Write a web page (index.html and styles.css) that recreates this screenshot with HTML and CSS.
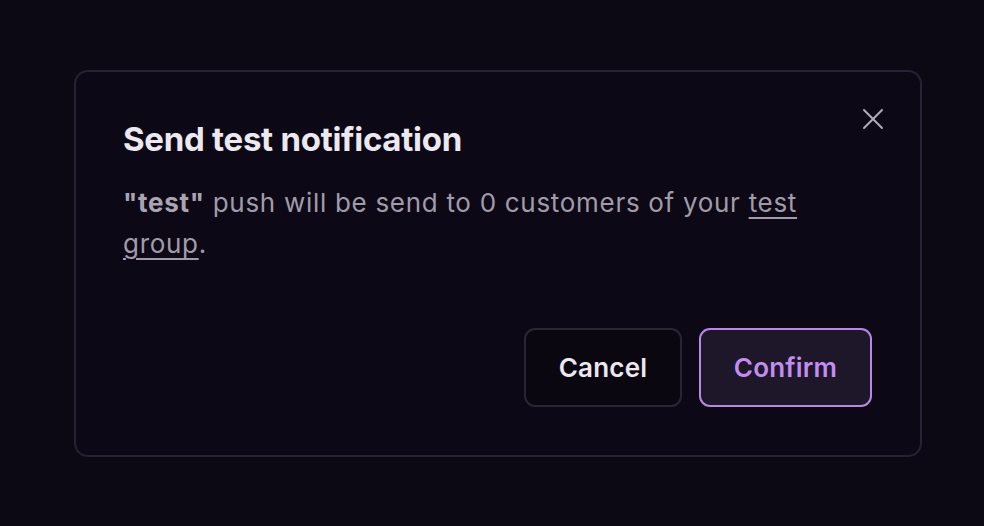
FILE: index.html
```html
<!DOCTYPE html>
<html lang="en">
<head>
  <meta charset="UTF-8" />
  <title>Send test notification</title>
  <link rel="stylesheet" href="styles.css">
</head>
<body>
  <div class="dialog">
    <button class="close" aria-label="Close">
      <svg width="22" height="22" viewBox="0 0 22 22" fill="none" stroke="currentColor" stroke-width="2" stroke-linecap="round">
        <path d="M2 2 L20 20 M20 2 L2 20" />
      </svg>
    </button>

    <h1>Send test notification</h1>
    <p>
      <strong>"test"</strong> push will be send to 0 customers of your <a href="#">test group</a>.
    </p>

    <div class="actions">
      <button class="btn cancel">Cancel</button>
      <button class="btn confirm">Confirm</button>
    </div>
  </div>
</body>
</html>
```

FILE: styles.css
```css
html, body {
  margin: 0;
  padding: 0;
  height: 100%;
  width: 100%;
  font-family: Inter, 'Noto Sans', sans-serif;
}
body {
  background: #0c0814;
  padding: 70px 62px 0 74px;
  box-sizing: border-box;
}
.dialog {
  position: relative;
  background: #0d0816;
  border: 2px solid #272233;
  border-radius: 14px;
  padding: 45px 48px 48px 47px;
  box-sizing: border-box;
  height: 387px;
  display: flex;
  flex-direction: column;
}
h1 {
  margin: 0;
  color: #ebe8ef;
  font-size: 33px;
  font-weight: 700;
  letter-spacing: -0.28px;
  line-height: 44px;
}
p {
  margin: 21px 0 0 0;
  color: #a19ba9;
  font-size: 26px;
  letter-spacing: 0.7px;
  line-height: 41px;
  max-width: 700px;
}
p strong {
  color: #aaa4b2;
}
p a {
  color: #a19ba9;
  text-decoration: underline;
  text-underline-offset: 5px;
  text-decoration-thickness: 2px;
}
.close {
  position: absolute;
  top: 36px;
  right: 36px;
  background: none;
  border: none;
  padding: 0;
  color: #b1abb9;
  cursor: pointer;
}
.actions {
  margin-top: auto;
  display: flex;
  justify-content: flex-end;
  gap: 17px;
}
.btn {
  height: 79px;
  border-radius: 11px;
  font-family: Inter, 'Noto Sans', sans-serif;
  font-size: 26px;
  font-weight: 600;
  letter-spacing: 0.2px;
  cursor: pointer;
}
.cancel {
  width: 158px;
  background: #0b0711;
  border: 2px solid #2a2532;
  color: #ebe8ef;
}
.confirm {
  width: 173px;
  background: #1e1629;
  border: 2px solid #b888e4;
  color: #c28df0;
}
```
